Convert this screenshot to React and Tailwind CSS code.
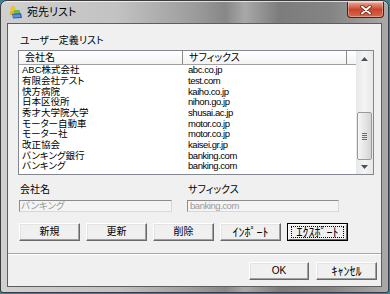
const rows = [
  ['ABC株式会社', 'abc.co.jp'],
  ['有限会社テスト', 'test.com'],
  ['快方病院', 'kaiho.co.jp'],
  ['日本区役所', 'nihon.go.jp'],
  ['秀才大学院大学', 'shusai.ac.jp'],
  ['モーター自動車', 'motor.co.jp'],
  ['モーター社', 'motor.co.jp'],
  ['改正協会', 'kaisei.gr.jp'],
  ['バンキング銀行', 'banking.com'],
  ['バンキング', 'banking.com'],
];

function WinButton({ children, isDefault, className = '' }) {
  if (isDefault) {
    return (
      <div className={`h-[18px] border border-black bg-[#f0f0f0] ${className}`}>
        <div className="h-full border border-t-white border-l-white border-r-[#696969] border-b-[#696969] px-[2px] py-[1px]">
          <div className="flex h-full items-center justify-center border border-dotted border-black">
            {children}
          </div>
        </div>
      </div>
    );
  }
  return (
    <div
      className={`flex h-[18px] items-center justify-center border border-t-white border-l-white border-r-[#696969] border-b-[#696969] bg-[#f0f0f0] shadow-[inset_-1px_-1px_0_#a0a0a0,inset_1px_1px_0_#e3e3e3] ${className}`}
    >
      {children}
    </div>
  );
}

// half-width katakana labels, drawn a bit larger so they read like the ui font
function Kana({ children }) {
  return (
    <span className="font-['Noto_Sans_CJK_JP',sans-serif] text-[12px] leading-[10px] [font-feature-settings:normal]">
      {children}
    </span>
  );
}

function TitleIcon() {
  return (
    <svg width="14" height="14" viewBox="0 0 14 14">
      <circle cx="4" cy="3.5" r="2.6" fill="#f2c12e" />
      <path d="M1 6.5 L7 5.5 L7 10 L1 10 Z" fill="#e8b020" />
      <rect x="5" y="5" width="6" height="5" rx="1" fill="#6cb84a" />
      <path d="M3 9 L12 8 L13 13 L4 13.5 Z" fill="#2d63b8" />
      <path d="M4 10 L11 9.5 L11.5 12 L4.5 12.4 Z" fill="#5e92dc" />
    </svg>
  );
}

function CloseButton() {
  return (
    <div className="absolute right-[4px] top-[1px] flex h-[16px] w-[37px] items-center justify-center rounded-b-[4px] border border-t-0 border-[#5a1a10] bg-gradient-to-b from-[#e9a592] via-[#c9462e] to-[#d8664a] shadow-[inset_0_0_0_1px_rgba(255,255,255,0.35)]">
      <svg width="12" height="10" viewBox="0 0 12 10">
        <path d="M2 1.5 L10 8.5 M10 1.5 L2 8.5" stroke="#5a1a10" strokeWidth="3.4" strokeLinecap="round" />
        <path d="M2 1.5 L10 8.5 M10 1.5 L2 8.5" stroke="#ffffff" strokeWidth="2" strokeLinecap="round" />
      </svg>
    </div>
  );
}

function Scrollbar() {
  return (
    <div className="flex w-[17px] flex-col bg-gradient-to-r from-[#e8e8e8] via-[#f4f4f4] to-[#e8e8e8]">
      <div className="flex h-[16px] items-center justify-center">
        <svg width="7" height="4" viewBox="0 0 7 4">
          <path d="M0 4 L3.5 0 L7 4 Z" fill="#4d5157" />
        </svg>
      </div>
      <div className="h-[45px]" />
      <div className="mx-[1px] flex h-[48px] items-center justify-center rounded-[2px] border border-[#9a9a9a] bg-gradient-to-r from-[#f6f6f6] via-[#e6e6e6] to-[#d4d4d4]">
        <div className="flex flex-col gap-[1px]">
          <div className="h-[1px] w-[5px] bg-[#6a6a6a]" />
          <div className="h-[1px] w-[5px] bg-[#6a6a6a]" />
          <div className="h-[1px] w-[5px] bg-[#6a6a6a]" />
          <div className="h-[1px] w-[5px] bg-[#6a6a6a]" />
        </div>
      </div>
      <div className="flex flex-1 items-center justify-center">
        <svg width="7" height="4" viewBox="0 0 7 4">
          <path d="M0 0 L3.5 4 L7 0 Z" fill="#4d5157" />
        </svg>
      </div>
    </div>
  );
}

export default function App() {
  return (
    <div className="h-[294px] w-[390px] overflow-hidden bg-[#3f8090] font-['Liberation_Sans','Noto_Sans_CJK_JP',sans-serif] text-black [font-feature-settings:'palt']">
      <div className="relative flex h-[293px] w-[389px] flex-col rounded-t-[7px] rounded-b-[3px] border border-[#3c3c3c] bg-[linear-gradient(to_right,#d0d0d0_0%,#c2c2c2_30%,#9c9c9c_50%,#878787_58%,#a8a8a8_63%,#7c7c7c_72%,#848484_85%,#a9a9a9_100%)] shadow-[inset_0_1px_0_rgba(255,255,255,0.7)]">
        <div className="flex h-[22px] items-center pl-[8px]">
          <TitleIcon />
          <span className="ml-[4px] text-[11px] leading-[14px]">宛先リスト</span>
        </div>
        <CloseButton />
        <div className="flex flex-1 flex-col px-[6px] pb-[5px]">
          <div className="flex flex-1 flex-col border border-[#5e5e5e] bg-[#f0f0f0]">
            <div className="flex flex-col pl-[10px] pt-[11px]">
              <div className="ml-[2px] h-[12px] text-[10px] leading-[12px]">ユーザー定義リスト</div>
              <div className="mt-[3px] flex h-[125px] w-[356px] border border-[#828790] bg-white">
                <div className="flex flex-1 flex-col">
                  <div className="flex h-[14px] border-b border-[#a0a0a0] bg-gradient-to-b from-white to-[#f3f3f3] text-[10px] leading-[13px]">
                    <div className="w-[164px] border-r border-[#8a8a8a] pl-[6px]">会社名</div>
                    <div className="w-[164px] border-r border-[#8a8a8a] pl-[6px]">サフィックス</div>
                    <div className="flex-1" />
                  </div>
                  {rows.map(([name, suffix], i) => (
                    <div key={i} className="flex h-[10.67px] items-center">
                      <div className="w-[164px] pl-[3px] text-[9.5px] leading-[10px] whitespace-nowrap">{name}</div>
                      <div className="pl-[5px] text-[9.5px] leading-[10px] tracking-[-0.45px] whitespace-nowrap">
                        {suffix}
                      </div>
                    </div>
                  ))}
                </div>
                <Scrollbar />
              </div>

              <div className="mt-[9px] flex">
                <div className="w-[169px]">
                  <div className="ml-[2px] h-[12px] text-[10px] leading-[12px]">会社名</div>
                  <div className="ml-[1px] mt-[4px] flex h-[12px] w-[153px] items-center border border-t-[#8c8c8c] border-l-[#8c8c8c] border-r-[#d8d8d8] border-b-[#d8d8d8] bg-[#f4f4f4] pl-[1px] text-[9.5px] leading-[10px] text-[#9a9a9a]">
                    バンキング
                  </div>
                </div>
                <div>
                  <div className="ml-[1px] h-[12px] text-[10px] leading-[12px]">サフィックス</div>
                  <div className="mt-[4px] flex h-[12px] w-[152px] items-center border border-t-[#8c8c8c] border-l-[#8c8c8c] border-r-[#d8d8d8] border-b-[#d8d8d8] bg-[#f4f4f4] pl-[2px] text-[9.5px] leading-[10px] tracking-[-0.45px] text-[#9a9a9a]">
                    banking.com
                  </div>
                </div>
              </div>

              <div className="ml-[1px] mt-[11px] flex gap-[6px] text-[10px] leading-[12px]">
                <WinButton className="w-[61px]">新規</WinButton>
                <WinButton className="w-[61px]">更新</WinButton>
                <WinButton className="w-[61px]">削除</WinButton>
                <WinButton className="w-[61px]">
                  <Kana>ｲﾝﾎﾟｰﾄ</Kana>
                </WinButton>
                <WinButton className="w-[61px]" isDefault>
                  <Kana>ｴｸｽﾎﾟｰﾄ</Kana>
                </WinButton>
              </div>
            </div>

            <div className="mt-[12px] border-t border-b border-t-[#a8a8a8] border-b-white" />

            <div className="flex justify-end gap-[7px] pr-[4px] pt-[7px] text-[10px] leading-[12px]">
              <WinButton className="h-[17px] w-[60px]">OK</WinButton>
              <WinButton className="h-[17px] w-[61px]">
                <Kana>ｷｬﾝｾﾙ</Kana>
              </WinButton>
            </div>
          </div>
        </div>
      </div>
    </div>
  );
}
